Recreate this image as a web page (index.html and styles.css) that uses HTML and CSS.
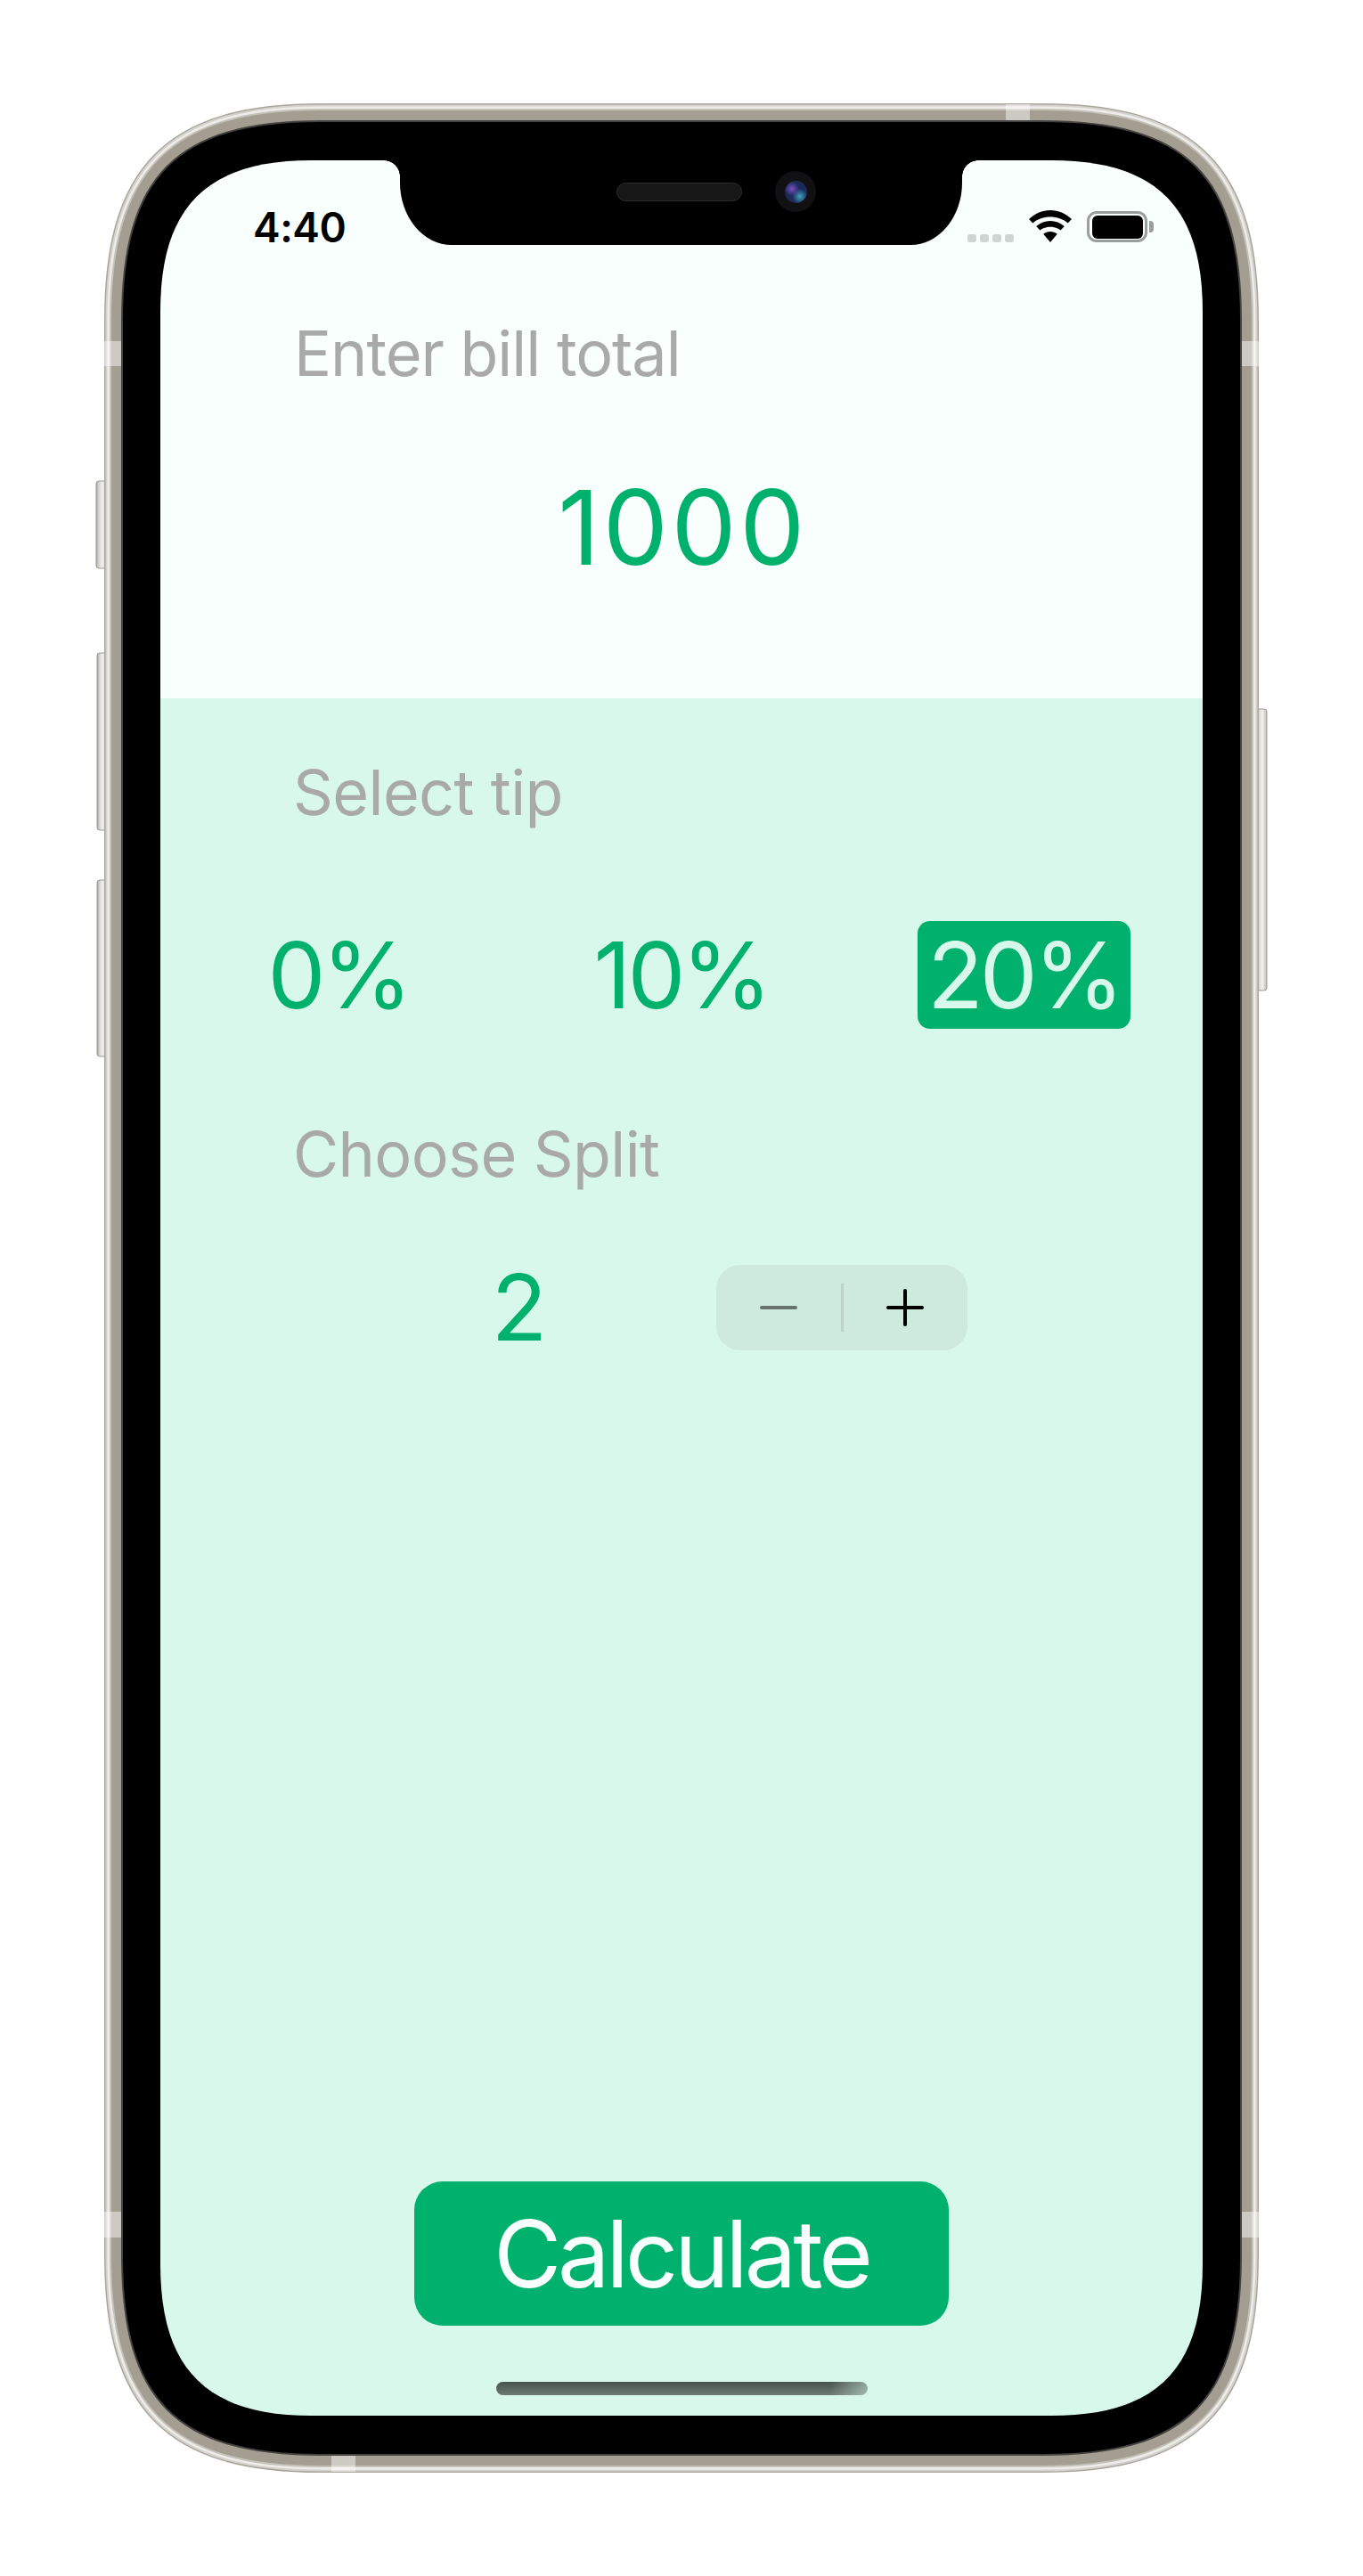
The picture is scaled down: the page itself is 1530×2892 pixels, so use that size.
FILE: index.html
```html
<!DOCTYPE html>
<html lang="en">

<head>
    <meta charset="UTF-8">
    <title>Tip Calculator</title>
    <meta name="viewport" content="width=device-width, initial-scale=1.0">
    <link rel="stylesheet" href="styles.css">
</head>

<body>
    <div class="device">
        <!-- marco del teléfono -->
        <svg class="frame" width="1530" height="2892" viewBox="0 0 1530 2892" aria-hidden="true">
            <defs>
                <path id="edge" d="M138 360 C138 198 198 137 360 137 H1170 C1332 137 1392 198 1392 360 V2532 C1392 2694 1332 2755 1170 2755 H360 C198 2755 138 2694 138 2532 Z" />
                <linearGradient id="key" x1="0" x2="1" y1="0" y2="0">
                    <stop offset="0" stop-color="#a9a59d" />
                    <stop offset="0.25" stop-color="#d8d6d1" />
                    <stop offset="0.6" stop-color="#f2f1ee" />
                    <stop offset="1" stop-color="#bdb9b1" />
                </linearGradient>
            </defs>
            <rect class="key" x="108" y="540" width="12" height="98" rx="3" />
            <rect class="key" x="109" y="733" width="11" height="199" rx="3" />
            <rect class="key" x="109" y="988" width="11" height="198" rx="3" />
            <rect class="key" x="1410" y="796" width="12" height="316" rx="3" />
            <use href="#edge" fill="none" stroke="#aaa69d" stroke-width="42" />
            <use href="#edge" fill="none" stroke="#d4d2cc" stroke-width="39" />
            <use href="#edge" fill="none" stroke="#eeece9" stroke-width="35" />
            <use href="#edge" fill="none" stroke="#c4c1b9" stroke-width="30" />
            <use href="#edge" fill="none" stroke="#a49e92" stroke-width="26" />
            <use href="#edge" fill="none" stroke="#45433f" stroke-width="4" />
            <use href="#edge" fill="#000" />
            <rect class="band" x="117" y="383" width="19" height="28" />
            <rect class="band" x="1394" y="383" width="19" height="28" />
            <rect class="band" x="117" y="2483" width="19" height="29" />
            <rect class="band" x="1394" y="2483" width="19" height="29" />
            <rect class="band" x="372" y="2757" width="27" height="18" />
            <rect class="band" x="1129" y="117" width="27" height="18" />
        </svg>

        <main class="screen">
            <section class="top">
                <div class="status">
                    <span class="time">4:40</span>
                    <div class="status-icons">
                        <div class="signal"><i></i><i></i><i></i><i></i></div>
                        <svg class="wifi" width="48" height="36" viewBox="0 0 48 36">
                            <path d="M24 0 C15 0 7 3.600 0 10 L4.300 14.500 C10 9.600 16.600 7.500 24 7.500 C31.400 7.500 38 9.600 43.700 14.500 L48 10 C41 3.600 33 0 24 0 Z" />
                            <path d="M24 12 C18 12 12.800 14.200 8.200 18 L12.400 22.600 C15.800 19.800 19.600 18.700 24 18.700 C28.400 18.700 32.200 19.800 35.600 22.600 L39.800 18 C35.200 14.200 30 12 24 12 Z" />
                            <path d="M24 24 C21 24 18.400 25 16.200 26.800 L24 36 L31.800 26.800 C29.600 25 27 24 24 24 Z" />
                        </svg>
                        <div class="battery"><div class="battery-level"></div></div>
                    </div>
                </div>
                <p class="label label-bill">Enter bill total</p>
                <div class="bill">1000</div>
            </section>

            <section class="bottom">
                <p class="label label-tip">Select tip</p>
                <div class="tips">
                    <span class="tip">0%</span>
                    <span class="tip">10%</span>
                    <span class="tip tip-selected">20%</span>
                </div>
                <p class="label label-split">Choose Split</p>
                <div class="split">
                    <span class="split-value">2</span>
                    <div class="stepper">
                        <span class="step"><svg width="42" height="42" viewBox="0 0 42 42"><path class="minus" d="M2 21 H40" /></svg></span>
                        <span class="step-line"></span>
                        <span class="step"><svg width="42" height="42" viewBox="0 0 42 42"><path class="plus" d="M2 21 H40 M21 2 V40" /></svg></span>
                    </div>
                </div>
                <button class="calculate">Calculate</button>
                <div class="home"></div>
            </section>

            <!-- muesca superior -->
            <div class="notch">
                <div class="speaker"></div>
                <div class="camera"><div class="lens"></div></div>
            </div>
        </main>
    </div>
</body>
</html>
```

FILE: styles.css
```css
body, html {
margin: 0;
padding: 0;
background: #fff;
}

.device {
position: relative;
width: 1530px;
height: 2892px;
padding: 180px 180px 0;
box-sizing: border-box;
font-family: "Inter", "Liberation Sans", sans-serif;
overflow: hidden;
}

.frame {
position: absolute;
top: 0;
left: 0;
}

.key {
fill: url(#key);
stroke: #9d9991;
stroke-width: 1;
}

.band {
fill: #fff;
opacity: 0.45;
}

/* pantalla con esquinas continuas */
.screen {
position: relative;
display: flex;
flex-direction: column;
width: 1170px;
height: 2532px;
clip-path: path("M0 170 C0 52 52 0 170 0 H1000 C1118 0 1170 52 1170 170 V2362 C1170 2480 1118 2532 1000 2532 H170 C52 2532 0 2480 0 2362 Z");
}

.top {
height: 604px;
background: #f9fffd;
}

.status {
display: flex;
justify-content: space-between;
padding: 47px 62px 0 104px;
height: 56px;
}

.time {
font-size: 46px;
font-weight: 600;
line-height: 56px;
letter-spacing: -0.500px;
color: #000;
}

.status-icons {
display: flex;
align-items: flex-end;
height: 45px;
margin-top: 0;
}

.signal {
display: flex;
gap: 4px;
margin-right: 17px;
}

.signal i {
width: 10px;
height: 9px;
border-radius: 3px;
background: #cfd3d1;
}

.wifi {
display: block;
margin-right: 17px;
fill: #000;
}

.battery {
position: relative;
width: 68px;
height: 35px;
box-sizing: border-box;
padding: 1.500px 2.500px;
border: 3px solid #9a9e9c;
border-radius: 11px;
}

.battery::after {
content: "";
position: absolute;
top: 8px;
right: -10px;
width: 5px;
height: 13px;
border-radius: 0 4px 4px 0;
background: #9a9e9c;
}

.battery-level {
height: 100%;
border-radius: 6px;
background: #000;
}

.label {
margin: 0;
padding-left: 150px;
font-size: 70px;
line-height: 84px;
letter-spacing: -1px;
color: #a9a9a9;
}

.label-bill {
margin-top: 72px;
}

.bill {
margin-top: 83px;
padding-left: 3px;
font-size: 116px;
line-height: 140px;
letter-spacing: 3.500px;
text-align: center;
color: #00b16d;
}

.bottom {
position: relative;
flex: 1;
display: flex;
flex-direction: column;
background: #d7f8ea;
}

.label-tip {
margin-top: 64px;
padding-left: 149px;
letter-spacing: -0.600px;
}

.tips {
display: grid;
grid-template-columns: repeat(3, 1fr);
align-items: center;
margin: 102px 8px 0 7px;
height: 121px;
}

.tip {
justify-self: center;
padding: 0 11px;
border-radius: 14px;
font-size: 103px;
line-height: 121px;
letter-spacing: -4px;
color: #00b16d;
}

.tip-selected {
background: #00b16d;
color: #d7f8ea;
}

.label-split {
margin-top: 99px;
padding-left: 149px;
letter-spacing: -0.600px;
}

.split {
display: flex;
align-items: center;
margin-top: 82px;
height: 96px;
}

.split-value {
width: 120px;
margin-left: 343px;
font-size: 103px;
line-height: 96px;
text-align: center;
color: #00b16d;
}

.stepper {
display: flex;
align-items: center;
width: 282px;
height: 96px;
margin-left: 161px;
border-radius: 27px;
background: #cdeadd;
}

.step {
flex: 1;
display: flex;
justify-content: center;
align-items: center;
}

.step svg {
display: block;
fill: none;
stroke-width: 4;
stroke-linecap: round;
}

.minus {
stroke: #69736e;
}

.plus {
stroke: #000;
}

.step-line {
width: 3px;
height: 54px;
background: #bdd3ca;
}

.calculate {
align-self: center;
width: 600px;
height: 162px;
margin-top: 933px;
padding: 0;
border: none;
border-radius: 32px;
background: #00b16d;
font-family: inherit;
font-size: 104px;
letter-spacing: -4px;
color: #f9fffd;
}

.home {
align-self: center;
width: 417px;
height: 15px;
margin-top: 63px;
border-radius: 8px;
background: linear-gradient(90deg, transparent 90%, rgba(215, 248, 234, 0.5) 100%), linear-gradient(#47534d, #6c7a73);
}

.notch {
position: absolute;
top: 0;
left: 269px;
width: 631px;
height: 95px;
background: #000;
border-radius: 0 0 58px 58px / 0 0 70px 70px;
}

.notch::before, .notch::after {
content: "";
position: absolute;
top: 0;
width: 18px;
height: 18px;
}

.notch::before {
left: -18px;
background: radial-gradient(circle at 0 100%, transparent 17.500px, #000 18px);
}

.notch::after {
right: -18px;
background: radial-gradient(circle at 100% 100%, transparent 17.500px, #000 18px);
}

.speaker {
position: absolute;
top: 25px;
left: 243px;
width: 141px;
height: 21px;
box-sizing: border-box;
border: 1px solid #2e2e2e;
border-radius: 11px;
background: #171717;
}

.camera {
position: absolute;
top: 12px;
left: 421px;
display: flex;
justify-content: center;
align-items: center;
width: 46px;
height: 46px;
border-radius: 50%;
background: #111113;
}

.lens {
width: 25px;
height: 25px;
border-radius: 50%;
background: radial-gradient(circle at 32% 36%, #7a4fc0 0, transparent 34%), radial-gradient(circle at 68% 70%, #3f9fc0 0, transparent 36%), #1b2a58;
}
```
